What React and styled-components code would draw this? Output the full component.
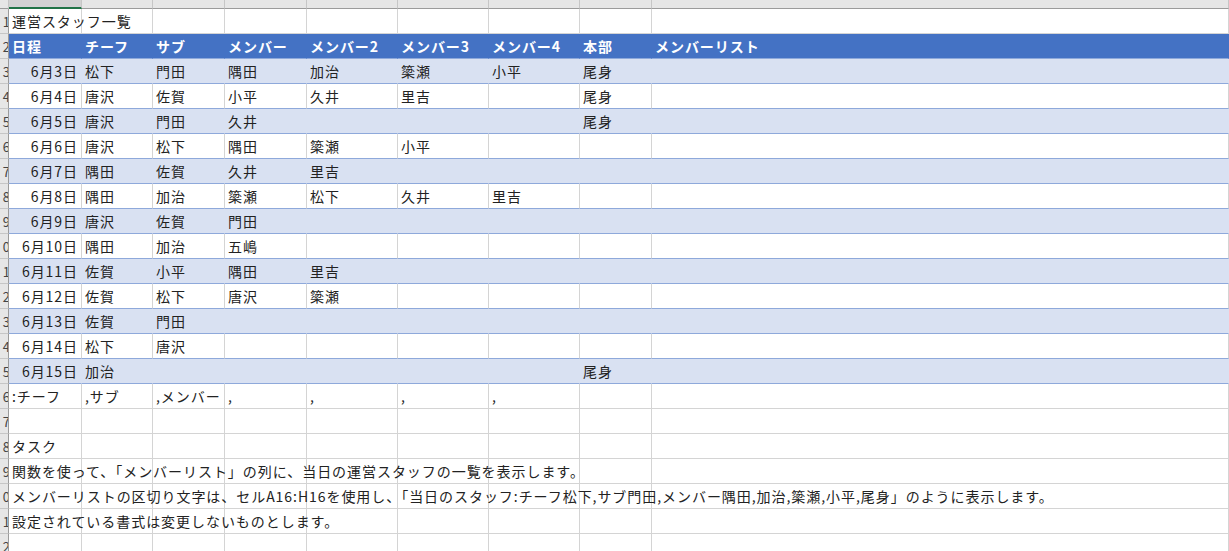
import React from "react";
import styled, { createGlobalStyle } from "styled-components";

const G = createGlobalStyle`
  html,body{margin:0;padding:0;background:#fff;overflow:hidden;}
  body{font-family:"Noto Sans CJK JP","Noto Sans",sans-serif;}
`;
const cols = "9px 73px 71px 72px 82px 91px 91px 91px 72px 1fr";
const Sheet = styled.div`
  display:grid;grid-template-columns:${cols};grid-auto-rows:25px;
  grid-template-rows:9px;width:1229px;
`;
const Head = styled.div`
  background:#e6e6e6;border-right:1px solid #c6c6c6;border-bottom:1px solid #9b9b9b;box-sizing:border-box;
  ${p=>p.$sel?"background:#d2d2d2;border-bottom:2px solid #217346;":""}
`;
const RowHead = styled.div`
  background:#e6e6e6;border-right:1px solid #9b9b9b;border-bottom:1px solid #c6c6c6;box-sizing:border-box;
  font-size:13px;color:#444;display:flex;align-items:center;justify-content:flex-end;overflow:hidden;line-height:1;
  span{margin-right:-2px;}
`;
const Cell = styled.div`
  box-sizing:border-box;font-size:14px;color:#222;white-space:nowrap;overflow:visible;letter-spacing:0.95px;
  display:flex;align-items:center;padding:0 3px;position:relative;z-index:${p=>p.$txt?1:0};
  justify-content:${p=>p.$right?"flex-end":"flex-start"};
  background:${p=>p.$k==="h"?"#4472c4":p.$k==="b"?"#d9e1f2":"transparent"};
  color:${p=>p.$k==="h"?"#fff":"#222"};font-weight:${p=>p.$k==="h"?700:400};
  border-right:1px solid ${p=>p.$k==="h"||p.$k==="b"?"transparent":"#d4d4d4"};
  border-bottom:1px solid ${p=>p.$k?"#8ea9db":"#d4d4d4"};
`;
const data = [
 ["6月3日","松下","門田","隅田","加治","簗瀬","小平","尾身"],
 ["6月4日","唐沢","佐賀","小平","久井","里吉","","尾身"],
 ["6月5日","唐沢","門田","久井","","","","尾身"],
 ["6月6日","唐沢","松下","隅田","簗瀬","小平","",""],
 ["6月7日","隅田","佐賀","久井","里吉","","",""],
 ["6月8日","隅田","加治","簗瀬","松下","久井","里吉",""],
 ["6月9日","唐沢","佐賀","門田","","","",""],
 ["6月10日","隅田","加治","五嶋","","","",""],
 ["6月11日","佐賀","小平","隅田","里吉","","",""],
 ["6月12日","佐賀","松下","唐沢","簗瀬","","",""],
 ["6月13日","佐賀","門田","","","","",""],
 ["6月14日","松下","唐沢","","","","",""],
 ["6月15日","加治","","","","","","尾身"],
];
const lbl=n=>String(n%10);
export default function App(){
  const rows=[];
  const plain=(n,vals)=>{rows.push(<RowHead key={"r"+n}><span>{lbl(n)}</span></RowHead>);
    for(let i=0;i<9;i++){const v=vals[i]||"";rows.push(<Cell key={n+"-"+i} $txt={!!v}>{v}</Cell>);}};
  for(let i=0;i<10;i++)rows.push(<Head key={"h"+i} $sel={i===1}/>);
  plain(1,["運営スタッフ一覧"]);
  rows.push(<RowHead key="r2"><span>2</span></RowHead>);
  ["日程","チーフ","サブ","メンバー","メンバー2","メンバー3","メンバー4","本部","メンバーリスト"].forEach((t,i)=>rows.push(<Cell key={"hd"+i} $k="h">{t}</Cell>));
  data.forEach((d,r)=>{const n=r+3;const k=r%2===0?"b":"w";
    rows.push(<RowHead key={"r"+n}><span>{lbl(n)}</span></RowHead>);
    [...d,""].forEach((v,i)=>rows.push(<Cell key={n+"-"+i} $k={k} $right={i===0}>{v}</Cell>));});
  plain(16,[":チーフ",",サブ",",メンバー",",",",",",",","]);
  plain(17,[]);
  plain(18,["タスク"]);
  plain(19,["関数を使って、「メンバーリスト」の列に、当日の運営スタッフの一覧を表示します。"]);
  plain(20,["メンバーリストの区切り文字は、セルA16:H16を使用し、「当日のスタッフ:チーフ松下,サブ門田,メンバー隅田,加治,簗瀬,小平,尾身」のように表示します。"]);
  plain(21,["設定されている書式は変更しないものとします。"]);
  plain(22,[]);
  return <><G/><Sheet>{rows}</Sheet></>;
}
